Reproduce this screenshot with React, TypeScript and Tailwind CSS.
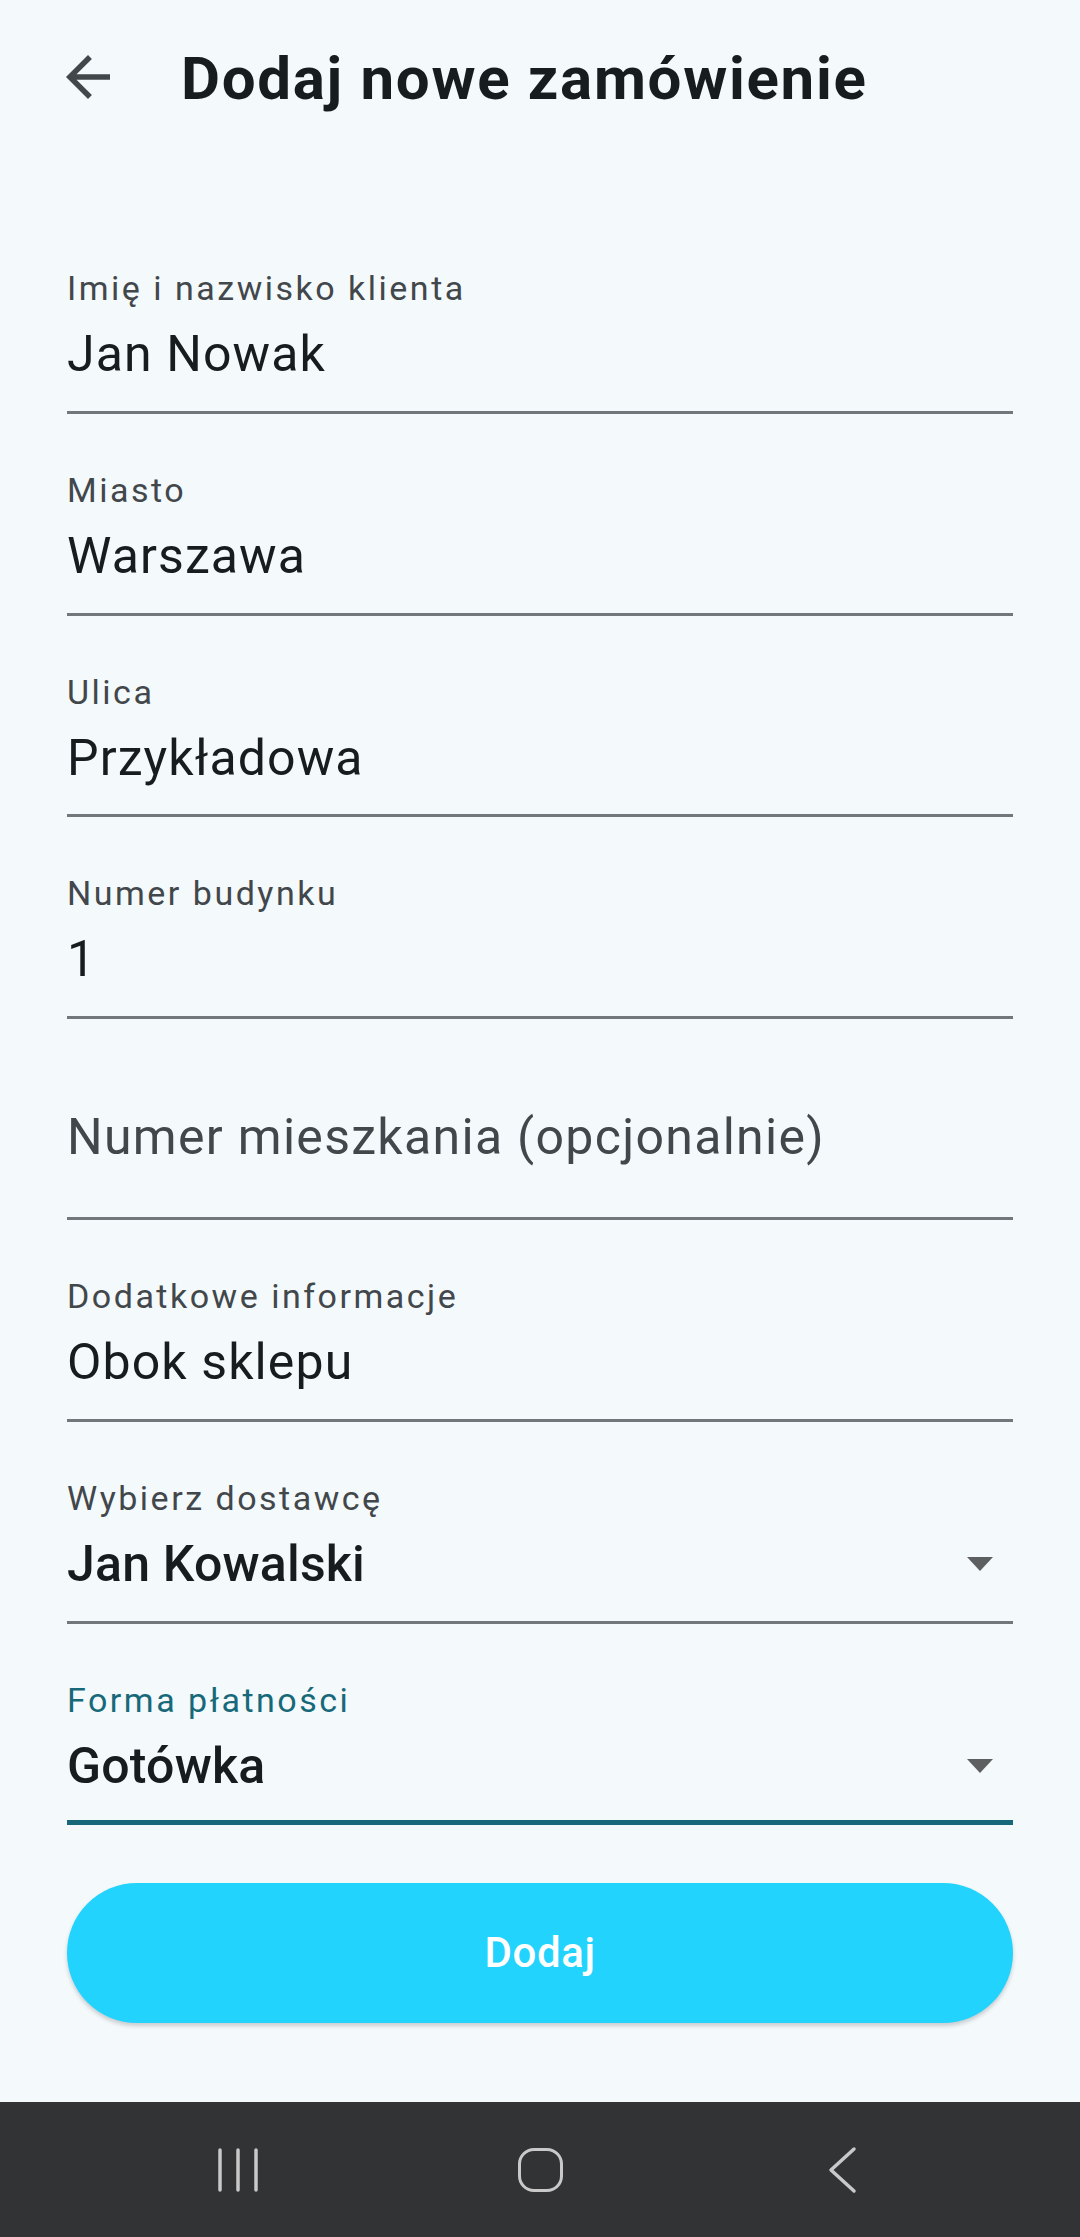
import React from "react";

type FieldProps = {
  label: string;
  value?: string;
  select?: boolean;
  focused?: boolean;
};

const Caret = () => (
  <svg width="26" height="14" viewBox="0 0 26 14" className="shrink-0">
    <path d="M0 0h26L13 14z" fill="#5e5f61" />
  </svg>
);

const Field = ({ label, value, select, focused }: FieldProps) => {
  if (!value) {
    return (
      <div className="box-border h-[201.6px] border-b-[3px] border-[#72777b] pt-[88px]">
        <p className="text-[50px] leading-[60px] tracking-[1.3px] text-[#42474b]">
          {label}
        </p>
      </div>
    );
  }
  return (
    <div
      className={
        focused
          ? "box-border flex h-[201.6px] flex-col border-b-[5px] border-[#17697a] pt-[56px]"
          : "box-border flex h-[201.6px] flex-col border-b-[3px] border-[#72777b] pt-[56px]"
      }
    >
      <p
        className={
          focused
            ? "text-[34px] leading-[40px] tracking-[2.5px] text-[#17697a]"
            : "text-[34px] leading-[40px] tracking-[2.5px] text-[#42474b]"
        }
      >
        {label}
      </p>
      <div className="mt-[16px] flex items-center justify-between pr-[20px]">
        <p
          className={
            select
              ? "text-[50px] font-medium leading-[60px] tracking-[0.2px] text-[#171c1f]"
              : "text-[50px] leading-[60px] tracking-[1.1px] text-[#171c1f]"
          }
        >
          {value}
        </p>
        {select && <Caret />}
      </div>
    </div>
  );
};

const NavBar = () => (
  <div className="flex h-[135px] shrink-0 items-center justify-center bg-[#323335]">
    <div className="flex w-[302px] justify-center">
      <svg width="44" height="46" viewBox="0 0 44 46">
        <g stroke="#c9c9c9" strokeWidth="3.5" strokeLinecap="round">
          <line x1="4" y1="3" x2="4" y2="43" />
          <line x1="22" y1="3" x2="22" y2="43" />
          <line x1="40" y1="3" x2="40" y2="43" />
        </g>
      </svg>
    </div>
    <div className="flex w-[302px] justify-center">
      <div className="h-[44px] w-[45px] rounded-[16px] border-[3.5px] border-[#c9c9c9]" />
    </div>
    <div className="flex w-[302px] justify-center">
      <svg width="32" height="48" viewBox="0 0 32 48">
        <path
          d="M28 3L5 24l23 21"
          fill="none"
          stroke="#c9c9c9"
          strokeWidth="3.5"
          strokeLinecap="round"
          strokeLinejoin="round"
        />
      </svg>
    </div>
  </div>
);

export default function App() {
  return (
    <div
      className="flex h-[2237px] w-full flex-col bg-[#f4f9fc]"
      style={{ fontFamily: "Roboto, 'Noto Sans', sans-serif" }}
    >
      <header className="flex h-[154px] shrink-0 items-center pl-[55px]">
        <svg width="66" height="66" viewBox="0 0 24 24" className="shrink-0">
          <path
            d="M20 11H7.83l5.59-5.59L12 4l-8 8 8 8 1.41-1.41L7.83 13H20v-2z"
            fill="#42474b"
          />
        </svg>
        <h1 className="ml-[60px] pt-[3px] text-[60px] font-bold leading-[68px] tracking-[1.7px] text-[#171c1f]">
          Dodaj nowe zamówienie
        </h1>
      </header>

      <main className="flex flex-1 flex-col px-[67px] pt-[58.4px]">
        <Field label="Imię i nazwisko klienta" value="Jan Nowak" />
        <Field label="Miasto" value="Warszawa" />
        <Field label="Ulica" value="Przykładowa" />
        <Field label="Numer budynku" value="1" />
        <Field label="Numer mieszkania (opcjonalnie)" />
        <Field label="Dodatkowe informacje" value="Obok sklepu" />
        <Field label="Wybierz dostawcę" value="Jan Kowalski" select />
        <Field label="Forma płatności" value="Gotówka" select focused />

        <button className="mt-[57.5px] flex h-[140px] w-full items-center justify-center rounded-full bg-[#22d3fe] shadow-[0_3px_4px_rgba(0,0,0,0.18)]">
          <span className="text-[42px] font-medium tracking-[0.6px] text-white">
            Dodaj
          </span>
        </button>
      </main>

      <NavBar />
    </div>
  );
}
